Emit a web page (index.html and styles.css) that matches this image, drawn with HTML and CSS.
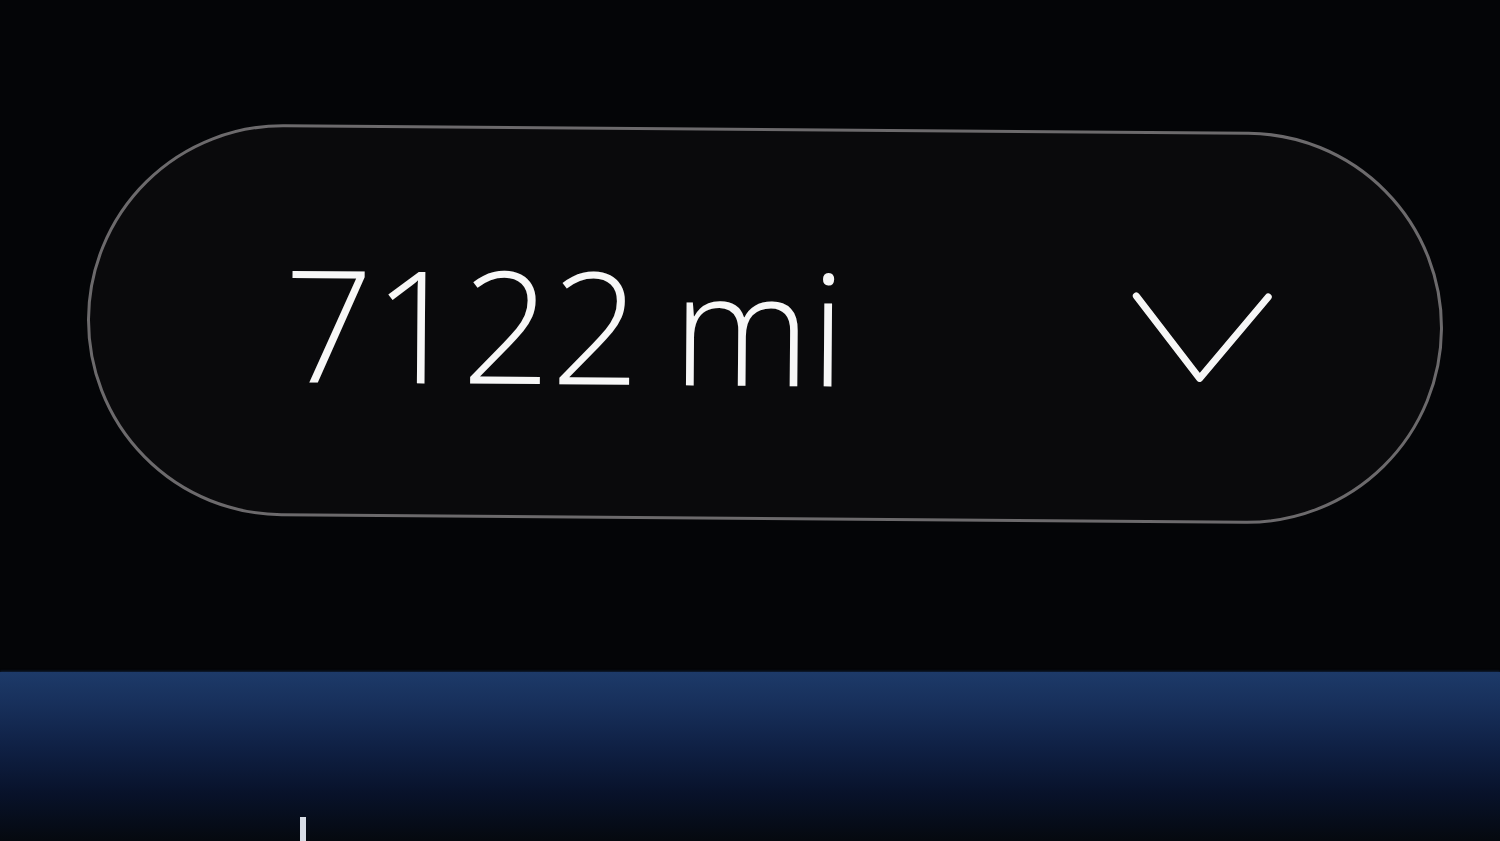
FILE: index.html
```html
<!DOCTYPE html>
<html lang="en">
<head>
<meta charset="utf-8">
<title>Range</title>
<link rel="stylesheet" href="styles.css">
</head>
<body>
  <main class="screen">
    <section class="range-area">
      <button class="range-pill" type="button">
        <span class="range-value">7122 mi</span>
        <svg class="chevron" viewBox="0 0 140 92" width="140" height="92" aria-hidden="true">
          <path d="M4 4 L68 86 L136 4" fill="none" stroke="#f6f6f6" stroke-width="7" stroke-linecap="round" stroke-linejoin="round"/>
        </svg>
      </button>
    </section>
    <section class="bottom-panel">
      <span class="marker"></span>
    </section>
  </main>
</body>
</html>
```

FILE: styles.css
```css
html, body {
  margin: 0;
  padding: 0;
  background: #040507;
  overflow: hidden;
}

.screen {
  width: 1500px;
  height: 841px;
  display: flex;
  flex-direction: column;
  background: #040507;
}

.range-area {
  height: 672px;
  display: flex;
  align-items: flex-start;
  padding: 128px 0 0 87px;
  box-sizing: border-box;
}

.range-pill {
  width: 1356px;
  height: 392px;
  box-sizing: border-box;
  border: 3px solid #6c6a6c;
  border-radius: 196px;
  background: #0a0a0c;
  display: flex;
  align-items: center;
  padding: 0 168px 0 194px;
  transform: rotate(0.45deg);
  transform-origin: 50% 50%;
  cursor: pointer;
}

.range-value {
  font-family: "Open Sans", "Noto Sans", sans-serif;
  font-weight: 300;
  font-size: 156px;
  line-height: 1;
  color: #f7f7f7;
  letter-spacing: 0;
  word-spacing: -8px;
  margin-top: 4px;
}

.chevron {
  margin-left: auto;
  margin-top: 22px;
  display: block;
}

.bottom-panel {
  flex: 1;
  position: relative;
  background: linear-gradient(180deg, #1d3a69 0%, #172f5a 20%, #0f2044 45%, #08122a 72%, #05090f 100%);
  box-shadow: 0 -1px 2px rgba(30, 60, 110, 0.5);
}

.marker {
  position: absolute;
  left: 300px;
  bottom: 0;
  width: 6px;
  height: 24px;
  background: #d8dde6;
}
```
